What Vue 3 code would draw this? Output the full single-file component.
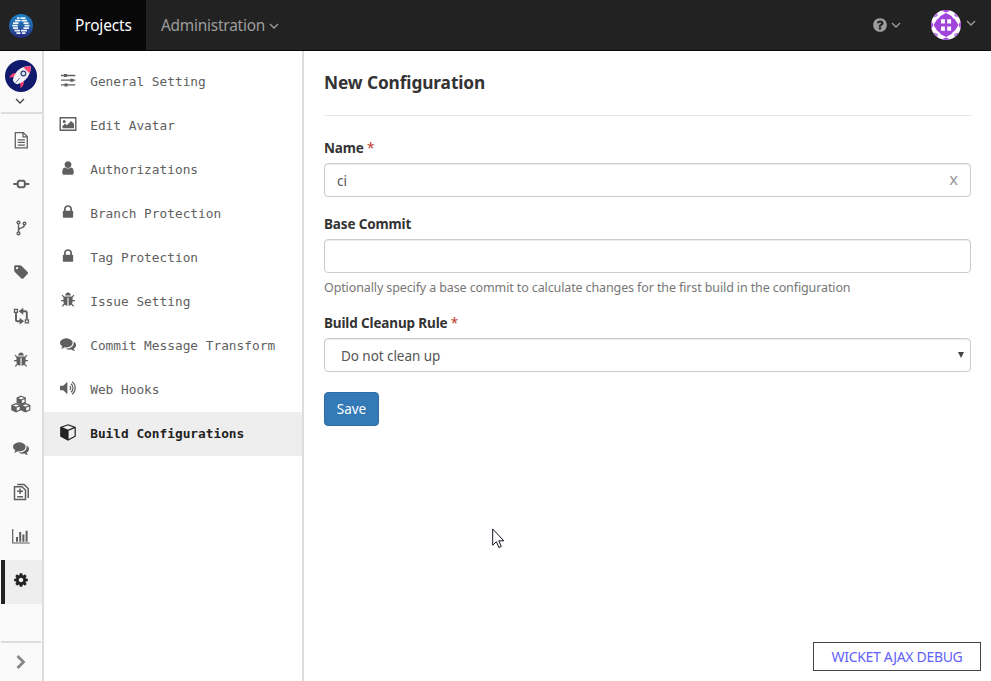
<script setup>
import { ref } from 'vue'

const name = ref('ci')
const baseCommit = ref('')

// Glyphs on a 1792-unit grid
const glyphs = {
  lock: 'M640 768h512v-192q0-106-75-181t-181-75-181 75-75 181v192zm832 96v576q0 40-28 68t-68 28h-960q-40 0-68-28t-28-68v-576q0-40 28-68t68-28h32v-192q0-184 132-316t316-132 316 132 132 316v192h32q40 0 68 28t28 68z',
  user: 'M1536 1399q0 109-62.5 187t-150.5 78h-854q-88 0-150.5-78t-62.5-187q0-85 8.500-160.500t31.500-152 58.500-131 94-89 134.500-34.500q131 128 313 128t313-128q76 0 134.500 34.500t94 89 58.500 131 31.500 152 8.500 160.500zm-256-887q0 159-112.500 271.500t-271.500 112.500-271.500-112.500-112.500-271.500 112.500-271.500 271.500-112.500 271.500 112.500 112.500 271.500z',
  bug: 'M1696 960q0 26-19 45t-45 19h-224q0 171-67 290l208 209q19 19 19 45t-19 45q-18 19-45 19t-45-19l-198-197q-5 5-15 13t-42 28.5-65 36.5-82 29-97 13v-896h-128v896q-51 0-101.5-13.5t-87-33-66-39-43.5-32.5l-15-14-183 207q-20 21-48 21-24 0-43-16-19-18-20.5-44.5t15.5-46.5l202-227q-58-114-58-274h-224q-26 0-45-19t-19-45 19-45 45-19h224v-294l-173-173q-19-19-19-45t19-45 45-19 45 19l173 173h844l173-173q19-19 45-19t45 19 19 45-19 45l-173 173v294h224q26 0 45 19t19 45zm-480-576h-640q0-133 93.5-226.5t226.5-93.5 226.5 93.5 93.5 226.5z',
  comments: 'M1408 768q0 139-94 257t-256.5 186.5-353.5 68.5q-86 0-176-16-124 88-278 128-36 9-86 16h-3q-11 0-20.5-8t-11.5-21q-1-3-1-6.5t.5-6.5 2-6l2.5-5 3.5-5.5 4-5 4.5-5 4-4.5q5-6 23-25t26-29.5 22.5-29 25-38.5 20.5-44q-124-72-195-177t-71-224q0-139 94-257t256.5-186.5 353.5-68.5 353.5 68.5 256.5 186.5 94 257zm384 256q0 120-71 224.5t-195 176.5q10 24 20.5 44t25 38.5 22.5 29 26 29.5 23 25q1 1 4 4.5t4.5 5 4 5 3.5 5.5l2.5 5 2 6 .5 6.5-1 6.5q-3 14-13 22t-22 7q-50-7-86-16-154-40-278-128-90 16-176 16-271 0-472-132 58 4 88 4 161 0 309-45t264-129q125-92 192-212t67-254q0-77-23-152 129 71 204 178t75 230z',
  cog: 'M1152 896q0-106-75-181t-181-75-181 75-75 181 75 181 181 75 181-75 75-181zm512-109v222q0 12-8 23t-20 13l-185 28q-19 54-39 91 35 50 107 138 10 12 10 25t-9 23q-27 37-99 108t-94 71q-12 0-26-9l-138-108q-44 23-91 38-16 136-29 186-7 28-36 28h-222q-14 0-24.5-8.5t-11.5-21.5l-28-184q-49-16-90-37l-141 107q-10 9-25 9-14 0-25-11-126-114-165-168-7-10-7-23 0-12 8-23 15-21 51-66.5t54-70.5q-27-50-41-99l-183-27q-13-2-21-12.5t-8-23.5v-222q0-12 8-23t19-13l186-28q14-46 39-92-40-57-107-138-10-12-10-24 0-10 9-23 26-36 98.5-107.5t94.5-71.5q13 0 26 10l138 107q44-23 91-38 16-136 29-186 7-28 36-28h222q14 0 24.5 8.5t11.5 21.5l28 184q49 16 90 37l142-107q9-9 24-9 13 0 25 10 129 119 165 170 7 8 7 22 0 12-8 23-15 21-51 66.5t-54 70.5q26 50 41 98l183 28q13 2 21 12.5t8 23.5z',
  help: 'M1024 1376v-192q0-14-9-23t-23-9h-192q-14 0-23 9t-9 23v192q0 14 9 23t23 9h192q14 0 23-9t9-23zm256-672q0-88-55.5-163t-138.5-116-170-41q-243 0-371 213-15 24 8 42l132 100q7 6 19 6 16 0 25-12 53-68 86-92 34-24 86-24 48 0 85.5 26t37.5 59q0 38-20 61t-68 45q-63 28-115.5 86.5t-52.5 125.5v36q0 14 9 23t23 9h192q14 0 23-9t9-23q0-19 21.5-49.5t54.5-49.5q32-18 49-28.5t46-35 44.5-48 28-60.5 12.5-81zm384 192q0 209-103 385.5t-279.5 279.5-385.5 103-385.5-103-279.5-279.5-103-385.5 103-385.5 279.5-279.5 385.5-103 385.5 103 279.5 279.5 103 385.5z'
}

// Line icons on a 20px grid: filled parts (f) and stroked parts (s, width w)
const drawn = {
  sliders: { s: 'M3 5.500h14.300M3 10.200h14.300M3 14.900h14.300', w: 1.300, f: 'M6 4h3v3h-3zM12.300 8.700h3v3h-3zM6.500 13.400h3v3h-3z' },
  image: { s: 'M2.2 3.8h15.6v12.4h-15.6z', w: 1.4, f: 'M4.500 14.300v-2.300l2.600-2.400 1.700 1.600 4.300-4.200 2.900 2.800v4.500zM4.700 7.600a1.500 1.500 0 1 0 3 0a1.500 1.500 0 1 0-3 0z' },
  file: { s: 'M4.300 2.600h8l4 4v11.300h-12zM12 2.800v4.100h4.100M6.700 9.800h7.200M6.700 12.400h7.200M6.700 15h7.200', w: 1.250 },
  commit: { s: 'M2.300 10h4.500M13.800 10h4.500M7.900 6.700h4.800l1.100 1.100v4.400l-1.100 1.100h-4.800l-1.100-1.100v-4.400z', w: 2 },
  branch: { s: 'M7.500 5.800v8.400M7.800 12.200q0-1.900 2.600-2.300 3-.7 3-3.200M6.100 4.600a1.400 1.400 0 1 0 2.800 0a1.400 1.400 0 1 0-2.800 0M6.100 15.400a1.400 1.400 0 1 0 2.800 0a1.400 1.400 0 1 0-2.800 0M12.200 5.500a1.300 1.300 0 1 0 2.600 0a1.300 1.300 0 1 0-2.600 0', w: 1.400 },
  tag: { f: 'M3.200 4.200q0-1 1-1h4.600q.9 0 1.800.8l6 6q1 1 0 2l-4.300 4.400q-.9.8-1.900 0l-6.300-6.200q-.9-.9-.9-1.800zM6.100 4.900a1.200 1.200 0 1 0 0 2.400a1.200 1.200 0 1 0 0-2.400z' },
  pull: { s: 'M5 6.800v7.100q0 1.300 1.300 1.300h5M9.800 5.200h4.600q1.400 0 1.400 1.400v7', w: 1.900, f: 'M7.600 5.200l4.700-3.500v7zM13.100 15.200l-4.500-3.400v6.800zM2.800 2.700h4.300v4.300h-4.300zM4.100 4v1.700h1.700v-1.700zM13.700 13.200h4.400v4.400h-4.400zM15 14.500v1.800h1.800v-1.800z' },
  cubes: { s: 'M10.200 2.200l4 1.800v4.300l-4 1.900-4-1.900v-4.300zM6.200 4.300l4 1.800 4-1.800M10.200 6.100v4M5.100 9.600l4.200 1.800v4.400l-4.200 2-4.200-2v-4.400zM.9 11.600l4.200 1.800 4.200-1.800M5.100 13.400v4.200M14.600 9.600l4.200 1.800v4.400l-4.200 2-4.200-2v-4.400zM10.400 11.600l4.200 1.800 4.200-1.800M14.600 13.400v4.200', w: 1.250, f: 'M10.200 6.100l-4-1.800v4l4 1.900zM5.100 13.400l-4.200-1.800v4.200l4.200 2zM14.600 13.400l-4.200-1.800v4.200l4.200 2z' },
  diff: { s: 'M3.500 4.700h7.500l3.500 3.300v9.400h-11zM6.200 2.500h6.800l4.200 4v9.600M6.200 9.300h5.800M9.100 6.500v5.500M6.200 14.700h5.800', w: 1.500 },
  chart: { s: 'M1.700 3v14h17', w: 1.200, f: 'M5 11h2v4.800h-2zM8.200 6h2v9.800h-2zM11.400 8.500h2v7.300h-2zM14.600 4.800h2v11h-2z' },
  speaker: { s: 'M11.800 8a2.600 2.600 0 0 1 0 4M13 5.800a5.400 5.400 0 0 1 0 8.400M14.100 3.600a8.200 8.200 0 0 1 0 12.800', w: 1.200, f: 'M2 7.800h3.200l4.200-4v12.400l-4.200-4h-3.200z' },
  cube: { s: 'M10 2.800l7.200 2.600v8.800l-7.200 3.800-7.200-3.800v-8.800zM2.800 5.400l7.200 2.900 7.200-2.900M10 8.300v9.600', w: 1.200, f: 'M2.800 5.400l7.200 2.900v9.700l-7.200-3.800z' }
}

const rail = ['file', 'commit', 'branch', 'tag', 'pull', 'bug', 'cubes', 'comments', 'diff', 'chart', 'cog']

const menu = [
  { icon: 'sliders', label: 'General Setting' },
  { icon: 'image', label: 'Edit Avatar' },
  { icon: 'user', label: 'Authorizations' },
  { icon: 'lock', label: 'Branch Protection' },
  { icon: 'lock', label: 'Tag Protection' },
  { icon: 'bug', label: 'Issue Setting' },
  { icon: 'comments', label: 'Commit Message Transform' },
  { icon: 'speaker', label: 'Web Hooks' },
  { icon: 'cube', label: 'Build Configurations', active: true }
]
</script>

<template>
  <div class="page">
    <header class="topbar">
      <a class="brand">
        <svg width="24" height="24" viewBox="0 0 24 24">
          <defs>
            <linearGradient id="brandFill" x1="0" y1="0" x2="0" y2="1">
              <stop offset="0" stop-color="#1c83c8" /><stop offset=".5" stop-color="#2461a8" /><stop offset="1" stop-color="#28287a" />
            </linearGradient>
          </defs>
          <circle cx="12" cy="12" r="12" fill="url(#brandFill)" />
          <path d="M8 4.200h2.500M11.500 4.200h5M6 6.700h5.500M12.500 6.700h5.500M4 9.200h5.500M14.500 9.200h5M3.300 11.700h5.500M15.500 11.700h5M4 14.200h5M14.500 14.200h5.500M5.500 16.700h5.500M12 16.700h6M7.500 19.200h4M13 19.200h3.500" stroke="#eef4fa" stroke-width="1.800" fill="none" />
        </svg>
      </a>
      <nav class="tabs">
        <a class="tab current">Projects</a>
        <a class="tab admin">Administration
          <svg class="caret" width="10" height="10" viewBox="0 0 10 10"><path d="M1 3l4 4 4-4" /></svg>
        </a>
      </nav>
      <div class="tools">
        <svg class="help" width="16" height="16" viewBox="0 0 1792 1792"><path :d="glyphs.help" /></svg>
        <svg class="caret help-caret" width="10" height="10" viewBox="0 0 10 10"><path d="M1 3l4 4 4-4" /></svg>
        <svg class="face" width="30" height="30" viewBox="0 0 30 30">
          <defs><clipPath id="faceClip"><circle cx="15" cy="15" r="15" /></clipPath></defs>
          <g clip-path="url(#faceClip)">
            <path fill="#fff" d="M0 0h30v30h-30z" />
            <path fill="#a044dc" d="M15 3l5.500 3 1.500 2 2 1.500 3.500 5.500-3.500 5.500-2 1.500-1.500 2-5.500 3-5.500-3-1.500-2-2-1.500-3.500-5.500 3.500-5.500 2-1.500 1.500-2z" />
            <path fill="#a044dc" d="M9 0h12l-6 2.600zM9 30h12l-6-2.600zM0 9v12l2.200-6zM30 9v12l-2.200-6z" />
            <path fill="#a044dc" opacity=".7" d="M3 4.500l3-2.500 1 4-4 1.500zM27 4.500l-3-2.500-1 4 4 1.500zM3 25.500l3 2.500 1-4-4-1.500zM27 25.500l-3 2.500-1-4 4-1.500z" />
            <path fill="#fff" d="M10 9.300h3.900v4.200h-3.900zM16.200 9.300h3.900v4.200h-3.900zM10 16.500h3.900v4.200h-3.900zM16.200 16.500h3.900v4.200h-3.900z" />
          </g>
        </svg>
        <svg class="caret face-caret" width="10" height="10" viewBox="0 0 10 10"><path d="M1 3l4 4 4-4" /></svg>
      </div>
    </header>

    <div class="body">
      <aside class="rail">
        <div class="project">
          <svg width="32" height="32" viewBox="0 0 32 32">
            <circle cx="16" cy="16" r="16" fill="#101b6e" />
            <path d="M11 13q-5 .2-6.800 4.800 3.200-1.400 6.100-.4zM19 21q.2 4.800-3.600 7.200.6-3.200-.7-5.900z" fill="#ff4270" />
            <path d="M25.800 6.300q-9.200-.4-14 5.200-3.200 4.200-4 8.500 1 3.400 4.600 4.200 5.200-1 8.300-4.600 5.300-5.600 5.100-13.300z" fill="#f1f1f8" />
            <path d="M25.800 6.300q-4 0-7.200 1.100l5.900 6.200q1.400-3.300 1.300-7.300z" fill="#ff4270" />
            <path d="M14.800 18l-4 4.400" stroke="#5a63a0" stroke-width=".9" />
            <circle cx="18.400" cy="13.500" r="2.400" fill="#d3e4fa" stroke="#33406f" stroke-width="1.200" />
          </svg>
          <svg class="caret dark" width="10" height="10" viewBox="0 0 10 10"><path d="M1 3l4 4 4-4" /></svg>
        </div>
        <nav class="rail-items">
          <a v-for="icon in rail" :key="icon" class="rail-item" :class="{ active: icon === 'cog' }">
            <svg v-if="glyphs[icon]" width="16" height="16" viewBox="0 0 1792 1792"><path :d="glyphs[icon]" fill="currentColor" /></svg>
            <svg v-else width="20" height="20" viewBox="0 0 20 20">
              <path v-if="drawn[icon].s" :d="drawn[icon].s" fill="none" stroke="currentColor" :stroke-width="drawn[icon].w" />
              <path v-if="drawn[icon].f" :d="drawn[icon].f" fill="currentColor" fill-rule="evenodd" />
            </svg>
          </a>
        </nav>
        <div class="expand">
          <svg width="12" height="16" viewBox="0 0 12 16"><path d="M2.500 2l6 6-6 6" fill="none" stroke="#888" stroke-width="2.800" /></svg>
        </div>
      </aside>

      <nav class="menu">
        <a v-for="item in menu" :key="item.label" class="menu-item" :class="{ active: item.active }">
          <span class="menu-icon">
            <svg v-if="glyphs[item.icon]" width="16" height="16" viewBox="0 0 1792 1792"><path :d="glyphs[item.icon]" fill="currentColor" /></svg>
            <svg v-else width="20" height="20" viewBox="0 0 20 20">
              <path v-if="drawn[item.icon].s" :d="drawn[item.icon].s" fill="none" stroke="currentColor" :stroke-width="drawn[item.icon].w" />
              <path v-if="drawn[item.icon].f" :d="drawn[item.icon].f" fill="currentColor" fill-rule="evenodd" />
            </svg>
          </span>
          <span>{{ item.label }}</span>
        </a>
      </nav>

      <main class="content">
        <h1>New Configuration</h1>
        <form @submit.prevent>
          <div class="group">
            <label>Name <span class="req">*</span></label>
            <div class="field">
              <input v-model="name" type="text" />
              <button type="button" class="clear" @click="name = ''">x</button>
            </div>
          </div>
          <div class="group">
            <label>Base Commit</label>
            <div class="field"><input v-model="baseCommit" type="text" /></div>
            <p class="hint">Optionally specify a base commit to calculate changes for the first build in the configuration</p>
          </div>
          <div class="group last">
            <label>Build Cleanup Rule <span class="req">*</span></label>
            <div class="field">
              <select><option>Do not clean up</option></select>
              <svg class="arrow" width="6" height="6" viewBox="0 0 6 6"><path d="M0 0h6l-3 6z" fill="#444" /></svg>
            </div>
          </div>
          <button class="save" type="submit">Save</button>
        </form>
      </main>
    </div>

    <a class="debug">WICKET AJAX DEBUG</a>
    <svg class="pointer" width="13" height="21" viewBox="0 0 13 21"><path d="M.7 1v16.200l3.700-3.500 2.500 5.800 2.400-1-2.500-5.700h5z" fill="#fff" stroke="#15121f" stroke-width="1" /></svg>
  </div>
</template>

<style>
body { margin: 0; }
</style>

<style scoped>
* { box-sizing: border-box; }
.page {
  position: relative;
  display: flex;
  flex-direction: column;
  width: 100%;
  height: 681px;
  overflow: hidden;
  background: #fff;
  color: #333;
  font-family: "Noto Sans", "Open Sans", sans-serif;
  font-size: 13.5px;
  line-height: 20px;
}
svg { display: block; flex: none; }
.topbar {
  display: flex;
  flex: none;
  height: 51px;
  background: #222;
  border-bottom: 1px solid #080808;
}
.brand { width: 60px; padding: 14px 0 0 9px; }
.tabs { display: flex; }
.tab {
  display: flex;
  align-items: center;
  gap: 4px;
  padding: 2px 15px 0;
  color: #9d9d9d;
  font-size: 15.4px;
  letter-spacing: -0.1px;
  white-space: nowrap;
}
.tab.current { width: 86px; background: #080808; color: #fff; }
.tab.admin { letter-spacing: -0.22px; }
.caret path { fill: none; stroke: #9d9d9d; stroke-width: 1.3; }
.caret.dark path { stroke: #444; }
.tools { display: flex; align-items: center; margin-left: auto; padding-right: 15px; }
.help path { fill: #9d9d9d; }
.help-caret { margin-left: 3px; }
.face { margin-left: 30px; }
.face-caret { margin: 0 0 4px 5px; }

.body { display: flex; flex: 1; min-height: 0; }
.rail {
  display: flex;
  flex-direction: column;
  width: 44px;
  padding-left: 1px;
  background: #fafafa;
  border-right: 2px solid #ddd;
}
.project {
  display: flex;
  flex-direction: column;
  align-items: center;
  gap: 4px;
  height: 63px;
  padding: 9px 1px 0 0;
  border-bottom: 2px solid #ddd;
}
.project .caret { margin-right: 2px; }
.rail-items { padding-top: 6px; }
.rail-item {
  display: flex;
  align-items: center;
  justify-content: center;
  height: 44px;
  padding: 0 1px 4px 0;
  color: #5f5f5f;
}
.rail-item.active { background: #eee; border-left: 4px solid #222; padding-right: 5px; color: #222; }
.expand {
  display: flex;
  align-items: center;
  justify-content: center;
  height: 40px;
  margin: auto 1px 0 0;
  border-top: 2px solid #ddd;
}

.menu { width: 260px; padding-top: 9px; border-right: 2px solid #ddd; }
.menu-item {
  display: flex;
  align-items: center;
  height: 44px;
  padding: 0 14px;
  color: #5f5f5f;
  font-family: "DejaVu Sans Mono", "Liberation Mono", monospace;
  font-size: 12.8px;
  white-space: nowrap;
}
.menu-icon { display: flex; justify-content: center; width: 20px; margin: 0 12.2px 4px 0; }
.menu-item.active { background: #eee; color: #222; font-weight: bold; }

.content { flex: 1; padding: 12px 20px 0; }
h1 {
  height: 53px;
  margin: 0 0 22px;
  border-bottom: 1px solid #e7e7e7;
  font-size: 17.3px;
  font-weight: 700;
  line-height: 40px;
  letter-spacing: -0.1px;
}
.group { margin-bottom: 17px; }
.group.last { margin: -1px 0 20px; }
label { display: block; margin-bottom: 5px; font-size: 13.5px; font-weight: 700; letter-spacing: -0.14px; }
.req { color: #c0392b; font-weight: 400; }
.field { position: relative; height: 34px; }
input, select {
  display: block;
  width: 100%;
  height: 34px;
  margin: 0;
  padding: 1px 12px 0;
  border: 1px solid #ccc;
  border-radius: 4px;
  background: #fff;
  box-shadow: inset 0 1px 1px rgba(0, 0, 0, .075);
  color: #555;
  font: inherit;
  outline: none;
}
select { padding-left: 16px; letter-spacing: -0.06px; appearance: none; }
.clear {
  position: absolute;
  top: 6px;
  right: 13px;
  padding: 0;
  border: 0;
  background: none;
  color: #999;
  font: inherit;
  font-size: 16.5px;
}
.arrow { position: absolute; right: 7px; top: 14px; }
.hint { height: 19px; margin: 5px 0 0; color: #777; font-size: 12.5px; letter-spacing: -0.116px; white-space: nowrap; }
.save {
  width: 55px;
  height: 34px;
  padding: 0;
  border: 1px solid #2e6da4;
  border-radius: 4px;
  background: #337ab7;
  color: #fff;
  font: inherit;
}
.debug {
  position: absolute;
  right: 10px;
  bottom: 10px;
  width: 168px;
  height: 29px;
  border: 1px solid #444;
  background: #fff;
  color: #6262fa;
  font-size: 14px;
  line-height: 28px;
  letter-spacing: -0.31px;
  text-align: center;
  white-space: nowrap;
}
.pointer { position: absolute; left: 492px; top: 528px; }
</style>
